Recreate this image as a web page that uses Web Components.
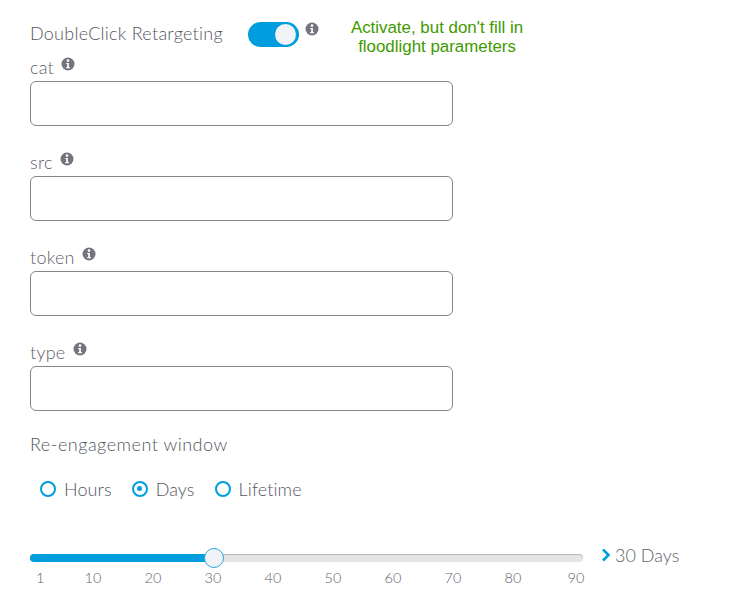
<!DOCTYPE html>
<html><head><meta charset="utf-8"><style>
html,body{margin:0;background:#fff}
body{font-family:Lato,"Open Sans",sans-serif;font-weight:300;color:#6d6e78}
</style></head><body>
<form-page>
  <toggle-row></toggle-row>
  <text-field label="cat"></text-field>
  <text-field label="src"></text-field>
  <text-field label="token"></text-field>
  <text-field label="type"></text-field>
  <window-choice></window-choice>
  <day-slider></day-slider>
</form-page>
<script>
const INFO=`<svg width="14" height="14" viewBox="0 0 14 14" aria-hidden="true"><circle cx="7" cy="7" r="6.5" fill="#74747f"/><circle cx="7" cy="3.6" r="1.3" fill="#fff"/><path d="M5.2 5.9h2.7v4.2h1v1.2H5.2v-1.2h1V7.1h-1z" fill="#fff"/></svg>`;
function def(name,html){customElements.define(name,class extends HTMLElement{constructor(){super();this.attachShadow({mode:'open'}).innerHTML=html;}});}
def('form-page',`<style>:host{display:block;padding:21px 0 0 30px;width:680px}</style><slot></slot>`);
def('info-tip',`<style>:host{display:inline-flex;width:14px;height:14px}</style>${INFO}`);
def('toggle-switch',`<style>:host{display:block;width:51px;height:25px;box-sizing:border-box;border-radius:13px;background:#009ddf;padding:2px 2px 2px 27px}
i{display:block;width:21px;height:21px;border-radius:50%;background:#f2f3f6}</style><i></i>`);
def('toggle-row',`<style>:host{display:flex;height:34px;align-items:flex-start}
.l{font-size:18px;line-height:25px;width:218px;color:#55565f;letter-spacing:.25px}
.i{margin:1px 0 0 6px}
.n{margin:-3px 0 0 23px;width:190px;flex:none;text-align:center;font:400 16.9px/19px "Liberation Sans",Arial,sans-serif;color:#3f9a00;white-space:nowrap}
</style><span class="l">DoubleClick Retargeting</span><toggle-switch style="margin-top:1px"></toggle-switch><info-tip class="i"></info-tip><div class="n">Activate, but don't fill in<br>floodlight parameters</div>`);
customElements.define('text-field',class extends HTMLElement{
  constructor(){super();this.attachShadow({mode:'open'});}
  connectedCallback(){this.shadowRoot.innerHTML=`<style>:host{display:block;height:95px}
  .h{display:flex;height:26px;font-size:18px;line-height:24px;color:#5f5f68;gap:7px;letter-spacing:.25px}
  info-tip{margin-top:2px}
  .b{width:423px;height:45px;box-sizing:border-box;border:1px solid #85858d;border-radius:6px;background:#fff}
  </style><div class="h"><span>${this.getAttribute('label')}</span><info-tip></info-tip></div><div class="b"></div>`;}
});
def('radio-dot',`<style>:host{display:block;width:16px;height:16px;box-sizing:border-box;border:2.5px solid #009ddf;border-radius:50%;padding:3px}
:host([on])::before{content:"";display:block;width:5px;height:5px;border-radius:50%;background:#009ddf}</style>`);
def('window-choice',`<style>:host{display:block;height:106px}
.t{font-size:18px;line-height:24px;color:#55565f;height:32px;margin-top:-3px;letter-spacing:.5px}
.r{display:flex;align-items:center;padding:0 0 0 10px;margin-top:13px;font-size:18px;line-height:24px;color:#55565f;letter-spacing:.1px}
.r radio-dot{margin-right:8px}.r span{margin-right:20px}
</style><div class="t">Re-engagement window</div><div class="r"><radio-dot></radio-dot><span>Hours</span><radio-dot on></radio-dot><span>Days</span><radio-dot></radio-dot><span>Lifetime</span></div>`);
def('day-slider',`<style>:host{display:flex;align-items:flex-start}
.s{width:553px}
.tr{position:relative;height:8px;border-radius:4px;background:#e5e5e5;box-shadow:inset 0 1px 1px #b5b5b5;margin-top:16px}
.f{width:184px;height:8px;border-radius:4px;background:#009ddf}
.th{position:absolute;left:174px;top:-6px;width:20px;height:20px;box-sizing:border-box;border-radius:50%;border:1px solid #2aa6de;background:#f2f3f6}
.tk{display:grid;grid-template-columns:33px repeat(8,60px) 66px;margin-top:6px;font-size:14.5px;line-height:20px;color:#62626c;text-align:center;width:579px;letter-spacing:.2px}
.tk span:first-child{text-align:left;padding-left:6px}
.v{display:flex;align-items:center;margin:5px 0 0 18px;font-size:18px;line-height:24px;color:#5f5f68;gap:4px}
</style><div class="s"><div class="tr"><div class="f"></div><div class="th"></div></div><div class="tk"><span>1</span><span>10</span><span>20</span><span>30</span><span>40</span><span>50</span><span>60</span><span>70</span><span>80</span><span>90</span></div></div>
<div class="v"><svg width="10" height="14" viewBox="0 0 10 14" aria-hidden="true"><path d="M2 1.5 7.5 7 2 12.5" fill="none" stroke="#009ddf" stroke-width="2.6"/></svg><span>30 Days</span></div>`);
</script>
</body></html>
